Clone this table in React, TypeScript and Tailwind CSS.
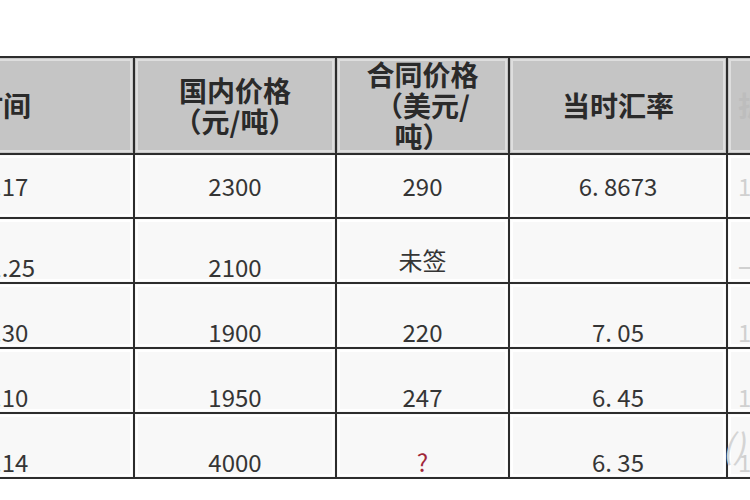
const head = "bg-[#c5c5c5] shadow-[inset_0_0_0_1px_#c5c5c5,inset_0_0_0_3px_#dedede] border-2 border-[#2d2d2d] text-center align-middle text-[28px] leading-[31px] font-semibold";
const cell = "bg-[#f8f8f8] shadow-[inset_0_0_0_1px_#f8f8f8,inset_0_0_0_3px_#ffffff] border-2 border-[#2d2d2d] text-center text-[24px] leading-[24px]";

type Row = { date: string; cn: string; usd: string; rate: string };

const rows: Row[] = [
  { date: "2008.9.17", cn: "2300", usd: "290", rate: "6. 8673" },
  { date: "2008.11.25", cn: "2100", usd: "未签", rate: "" },
  { date: "2009.3.30", cn: "1900", usd: "220", rate: "7. 05" },
  { date: "2009.6.10", cn: "1950", usd: "247", rate: "6. 45" },
  { date: "2010.1.14", cn: "4000", usd: "?", rate: "6. 35" },
];

const tail = ["1", "一", "1", "1", "1"];

export default function App() {
  return (
    <div
      className="relative w-[750px] h-[500px] overflow-hidden bg-white"
      style={{ fontFamily: '"Noto Sans CJK SC", "Noto Sans", sans-serif' }}
    >
      <table className="table-fixed border-collapse ml-[-185px] mt-[56px] w-[1135px]">
        <colgroup>
          <col className="w-[318px]" />
          <col className="w-[202px]" />
          <col className="w-[173px]" />
          <col className="w-[218px]" />
          <col className="w-[224px]" />
        </colgroup>
        <thead>
          <tr className="h-[97px]">
            <th className={`${head} text-[#2a2a2a]`}>签约时间</th>
            <th className={`${head} text-[#2a2a2a]`}>
              国内价格
              <br />
              （元/吨）
            </th>
            <th className={`${head} text-[#2a2a2a]`}>
              合同价格
              <br />
              （美元/
              <br />
              吨）
            </th>
            <th className={`${head} text-[#2a2a2a]`}>当时汇率</th>
            <th className={`${head} text-left pl-[10px] text-[#bdbdbd]`}>折合</th>
          </tr>
        </thead>
        <tbody>
          {rows.map((r, i) => {
            const v = i === 0 ? "align-middle" : "align-bottom pb-[3px]";
            return (
              <tr key={r.date} className={i === 0 ? "h-[64px]" : "h-[65px]"}>
                <td className={`${cell} ${v} text-[#353535]`}>{r.date}</td>
                <td className={`${cell} ${v} text-[#353535]`}>{r.cn}</td>
                <td
                  className={`${cell} ${v} ${r.usd === "?" ? "text-[#a1283a]" : "text-[#353535]"} ${
                    r.usd === "未签" ? "pb-[10px]" : ""
                  }`}
                >
                  {r.usd}
                </td>
                <td className={`${cell} ${v} text-[#353535]`}>{r.rate}</td>
                <td className={`${cell} ${v} text-left pl-[10px] text-[#d0d0d0]`}>{tail[i]}</td>
              </tr>
            );
          })}
        </tbody>
      </table>
      <div className="absolute left-[722px] top-[428px] text-[34px] italic text-[#d4d4d4] leading-none">
        ()
      </div>
    </div>
  );
}
